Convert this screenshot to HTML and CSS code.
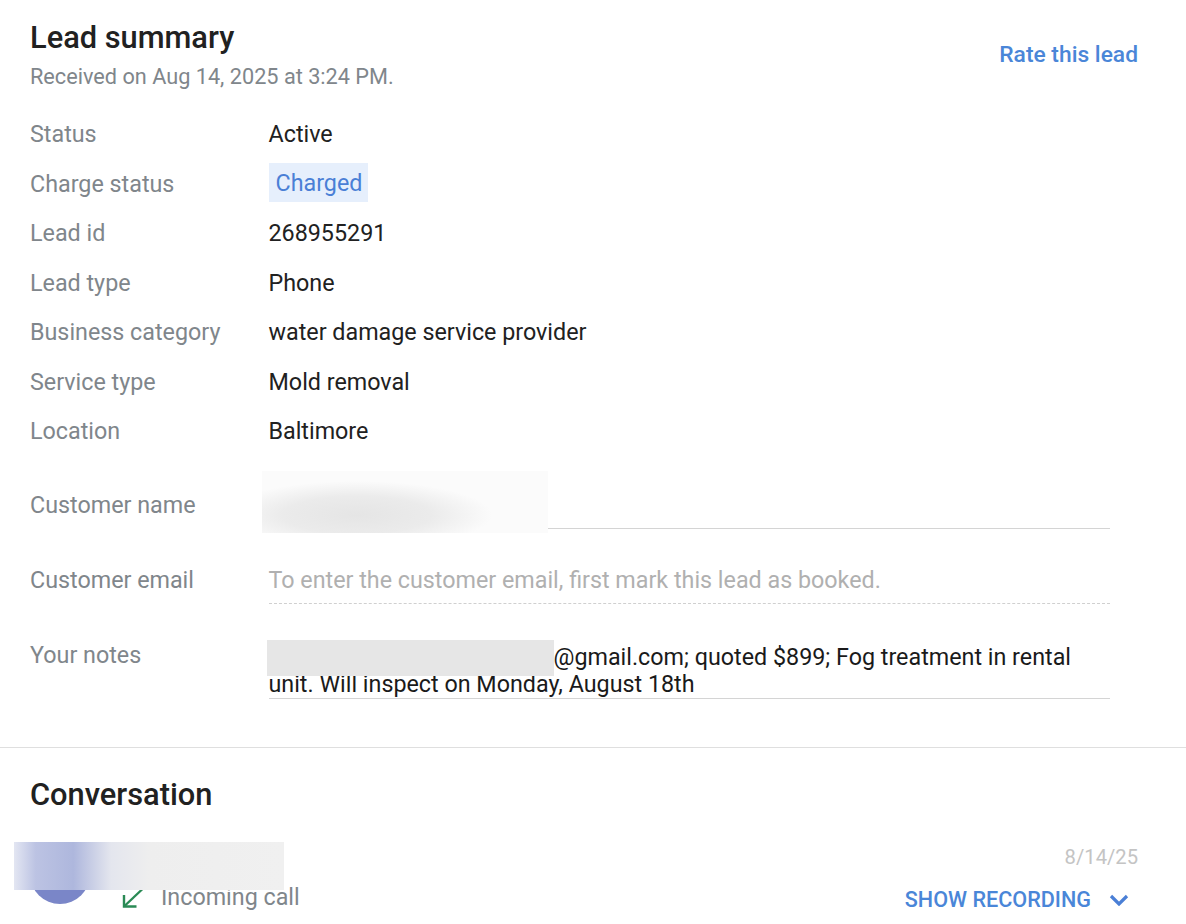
FILE: index.html
```html
<!DOCTYPE html>
<html lang="en">
<head>
  <meta charset="UTF-8">
  <title>Lead summary</title>
  <link rel="stylesheet" href="styles.css">
</head>
<body>
  <!-- Lead details -->
  <section class="summary">
    <div class="summary-head">
      <div>
        <h2>Lead summary</h2>
        <p class="received">Received on Aug 14, 2025 at 3:24 PM.</p>
      </div>
      <a class="rate-link">Rate this lead</a>
    </div>

    <div class="rows">
      <div class="row"><span class="label">Status</span><span>Active</span></div>
      <div class="row"><span class="label">Charge status</span><span class="charged">Charged</span></div>
      <div class="row"><span class="label">Lead id</span><span>268955291</span></div>
      <div class="row"><span class="label">Lead type</span><span>Phone</span></div>
      <div class="row"><span class="label">Business category</span><span>water damage service provider</span></div>
      <div class="row"><span class="label">Service type</span><span>Mold removal</span></div>
      <div class="row"><span class="label">Location</span><span>Baltimore</span></div>
    </div>

    <div class="field field-name">
      <span class="label">Customer name</span>
      <div class="field-value solid"><div class="blur blur-name"></div></div>
    </div>
    <div class="field field-email">
      <span class="label">Customer email</span>
      <div class="field-value dashed">To enter the customer email, first mark this lead as booked.</div>
    </div>
    <div class="field field-notes">
      <span class="label">Your notes</span>
      <div class="field-value solid notes">
        <span class="notes-indent"></span>@gmail.com; quoted $899; Fog treatment in rental unit. Will inspect on Monday, August 18th
        <div class="blur blur-notes"></div>
      </div>
    </div>
  </section>

  <!-- Conversation -->
  <section class="conversation">
    <h2>Conversation</h2>
    <div class="call">
      <div class="avatar"></div>
      <div class="call-info">
        <svg class="call-arrow" width="24" height="24" viewBox="0 0 24 24" fill="none" stroke="#2a8a55" stroke-width="2.4">
          <path d="M23 2.5 4 20.5"/>
          <path d="M4 9v11.5h12.5"/>
        </svg>
        <span class="call-type">Incoming call</span>
      </div>
      <div class="blur blur-caller"></div>
      <div class="call-side">
        <span class="call-date">8/14/25</span>
        <a class="recording">SHOW RECORDING
          <svg width="20" height="12" viewBox="0 0 20 12" fill="none" stroke="#4a7fd6" stroke-width="3.2">
            <path d="M2 2l8 8 8-8"/>
          </svg>
        </a>
      </div>
    </div>
  </section>
</body>
</html>
```

FILE: styles.css
```css
/* General */
body {
  margin: 0;
  height: 924px;
  overflow: hidden;
  background-color: #fff;
  color: #212121;
  font-family: Roboto, "Liberation Sans", sans-serif;
  font-size: 23.3px;
  line-height: 27px;
}

h2 {
  margin: 0;
  font-size: 30.8px;
  font-weight: 500;
  line-height: 36px;
}

a {
  color: #4a86d8;
  font-weight: 500;
}

.label {
  flex: none;
  width: 238.5px;
  color: #80868b;
}

/* Lead summary */
.summary {
  padding: 20px 48px 0 30px;
  height: 748px;
  box-sizing: border-box;
  border-bottom: 1px solid #dfdfdf;
}

.summary-head {
  display: flex;
  justify-content: space-between;
  align-items: flex-start;
}

.received {
  margin: 8px 0 0;
  color: #80868b;
  font-size: 21.7px;
  line-height: 26px;
}

.rate-link {
  margin-top: 21px;
  font-size: 22.8px;
}

.rows {
  margin-top: 20px;
}

.row {
  display: flex;
  align-items: center;
  height: 49.5px;
}

.charged {
  margin-bottom: 3px;
  padding: 7px 6px 5px 7px;
  background-color: #e6effc;
  color: #4a7fd6;
}

/* Editable fields */
.field {
  display: flex;
  align-items: flex-start;
  margin-right: 28px;
}

.field-value {
  position: relative;
  flex: 1;
}

.solid {
  border-bottom: 1px solid #d4d4d4;
}

.dashed {
  border-bottom: 1px dashed #d0d0d0;
  color: #b0b0b0;
  padding-bottom: 9px;
}

.field-name {
  margin-top: 35px;
}

.field-name .field-value {
  height: 36px;
}

.field-email {
  margin-top: 38px;
}

.field-notes {
  margin-top: 38px;
}

.notes {
  padding-top: 2px;
  color: #1a1a1a;
}

.notes-indent {
  display: inline-block;
  width: 285px;
}

/* Blurred boxes over private data */
.blur {
  position: absolute;
}

.blur-name {
  left: -7px;
  top: -21px;
  width: 286px;
  height: 62px;
  background: radial-gradient(ellipse 135px 34px at 95px 44px, #e5e5e5 0%, #ebebeb 55%, #fbfbfb 100%) #fcfcfc;
}

.blur-notes {
  left: -2px;
  top: -2px;
  width: 287px;
  height: 36px;
  background-color: #e6e6e6;
}

/* Conversation */
.conversation {
  padding: 29px 48px 0 30px;
}

.call {
  position: relative;
  height: 100px;
}

.avatar {
  position: absolute;
  left: 0;
  top: 31px;
  width: 60px;
  height: 60px;
  border-radius: 50%;
  background-color: #7a86c8;
}

.blur-caller {
  left: -16px;
  top: 29px;
  width: 270px;
  height: 48px;
  background: linear-gradient(90deg, #e3e6f2 0, #bcc3e3 8%, #aeb7dd 22%, #e4e6ee 36%, #eeeeee 50%, #f0f0f0 100%);
}

.call-info {
  position: absolute;
  left: 90px;
  top: 71px;
  display: flex;
  align-items: center;
  gap: 17px;
}

.call-type {
  color: #80868b;
}

.call-side {
  position: absolute;
  right: 0;
  top: 31px;
  display: flex;
  flex-direction: column;
  align-items: flex-end;
  gap: 15px;
}

.call-date {
  color: #c4c4c4;
  font-size: 20.2px;
}

.recording {
  display: flex;
  align-items: center;
  gap: 18px;
  margin-right: 9px;
  font-size: 21.6px;
}
```
